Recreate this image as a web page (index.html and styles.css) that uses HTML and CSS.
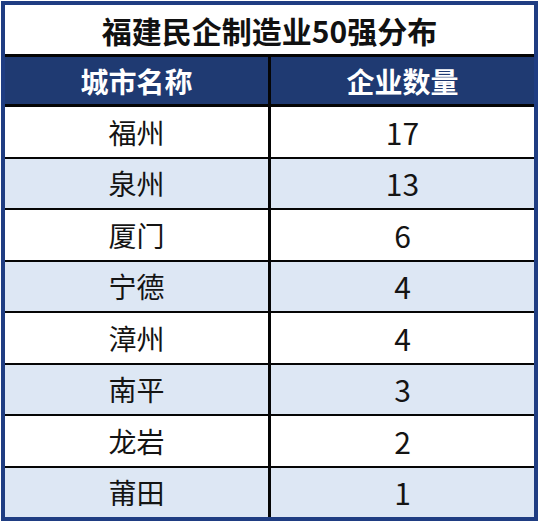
FILE: index.html
```html
<!DOCTYPE html>
<html lang="zh-CN">
<head>
<meta charset="utf-8">
<link rel="stylesheet" href="styles.css">
</head>
<body>
<div class="frame">
  <div class="title">福建民企制造业50强分布</div>
  <div class="head">城市名称</div>
  <div class="head">企业数量</div>
  <div class="cell">福州</div><div class="cell num">17</div>
  <div class="cell alt">泉州</div><div class="cell alt num">13</div>
  <div class="cell">厦门</div><div class="cell num">6</div>
  <div class="cell alt">宁德</div><div class="cell alt num">4</div>
  <div class="cell">漳州</div><div class="cell num">4</div>
  <div class="cell alt">南平</div><div class="cell alt num">3</div>
  <div class="cell">龙岩</div><div class="cell num">2</div>
  <div class="cell alt">莆田</div><div class="cell alt num">1</div>
</div>
</body>
</html>
```
FILE: styles.css
```css
html, body {
  margin: 0;
  padding: 0;
  background: #ffffff;
}
body {
  width: 540px;
  height: 528px;
  overflow: hidden;
  font-family: "Noto Sans CJK SC", "Noto Sans", sans-serif;
}
.frame {
  margin: 1px 0 0 1px;
  width: 529px;
  border: 4px solid #1f3d82;
  background: #050505;
  display: grid;
  grid-template-columns: 263px 263px;
  grid-template-rows: 50px 48px repeat(8, 49.5px);
  column-gap: 3px;
  row-gap: 2px;
}
.title {
  grid-column: 1 / 3;
  background: #ffffff;
  margin-bottom: 1px;
  display: flex;
  align-items: center;
  justify-content: center;
  font-size: 30px;
  font-weight: 700;
  color: #111111;
  letter-spacing: 0;
}
.head {
  background: #1f3a72;
  margin-bottom: 1px;
  color: #ffffff;
  font-size: 28px;
  font-weight: 700;
  display: flex;
  align-items: center;
  justify-content: center;
}
.cell {
  background: #ffffff;
  color: #141414;
  font-size: 28px;
  display: flex;
  align-items: center;
  justify-content: center;
}
.cell.alt {
  background: #dde7f4;
}
.num {
  font-size: 30px;
}
```
